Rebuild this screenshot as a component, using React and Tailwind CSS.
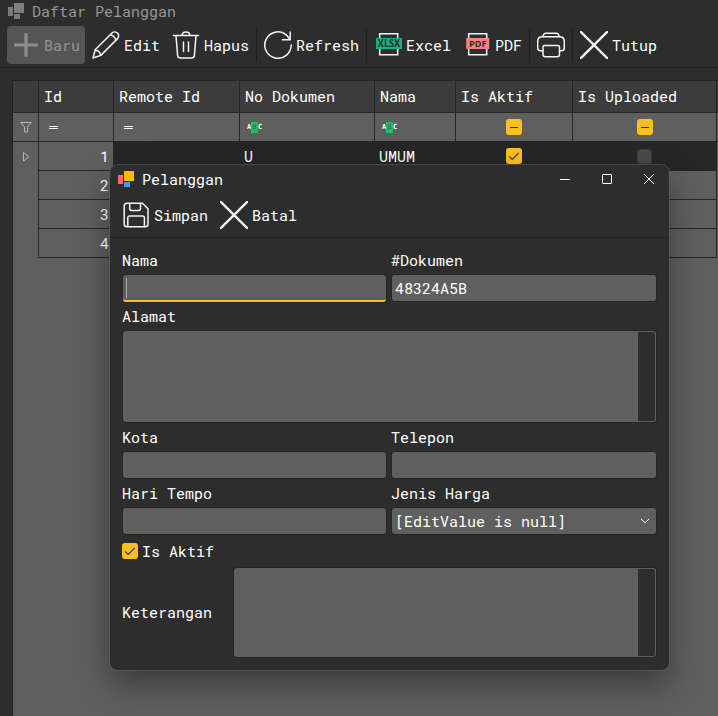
import React, { useState } from 'react'

const columns = [
  { key: "id", title: "Id", filter: "equals", width: "w-[75px]" },
  { key: "remoteId", title: "Remote Id", filter: "equals", width: "w-[126px]" },
  { key: "noDokumen", title: "No Dokumen", filter: "text", width: "w-[135px]" },
  { key: "nama", title: "Nama", filter: "text", width: "w-[81px]" },
  { key: "isAktif", title: "Is Aktif", filter: "check", width: "w-[117px]" },
  { key: "isUploaded", title: "Is Uploaded", filter: "check", width: "w-[144px]" },
];

const rows = [
  { id: 1, noDokumen: "U", nama: "UMUM", isAktif: true, isUploaded: false },
  { id: 2 },
  { id: 3 },
  { id: 4 },
];

const Icon = ({ children, className = "" }) => (
  <svg
    width="28"
    height="28"
    viewBox="0 0 28 28"
    fill="none"
    stroke="#f4f4f4"
    strokeWidth="1.5"
    strokeLinecap="round"
    strokeLinejoin="round"
    className={`shrink-0 ${className}`}
  >
    {children}
  </svg>
);

const PlusIcon = () => (
  <Icon><path d="M14 2.2v23.6M2.2 14h23.6" stroke="#8e8e8e" strokeWidth="3.2" strokeLinecap="butt" /></Icon>
);

const PencilIcon = () => (
  <Icon>
    <path d="M1 27l2.2-8.2L20 2c1.6-1.6 4-1.4 5.5.1s1.6 4 0 5.5L8.8 24.4z" />
    <path d="M18.2 4c2.8.2 5.3 2.7 5.6 5.5M3.4 19.2c2.6.3 4.9 2.5 5.2 5.1" />
  </Icon>
);

const TrashIcon = () => (
  <Icon>
    <path d="M1.5 4.5h25M10.2 4.3c0-4.3 7.6-4.3 7.6 0M4 5l1.6 19.4c.2 1.8 1.2 2.6 2.8 2.6h11.2c1.6 0 2.6-.8 2.8-2.6L24 5M11.5 11v9.5M16.5 11v9.5" />
  </Icon>
);

const RefreshIcon = () => (
  <Icon>
    <path d="M27.2 14A13.2 13.2 0 1 1 22.3 3.8L26 8.5" />
    <path d="M26.2 1v7.7h-7.7" />
  </Icon>
);

const ExcelIcon = () => (
  <Icon>
    <path d="M5.7 7V2.8h18V7M5.7 18v5.7h18V18" strokeLinecap="butt" strokeLinejoin="miter" />
    <rect x="2" y="7" width="26" height="11" fill="#13b183" stroke="none" />
    <text x="15" y="16" textAnchor="middle" textLength="22.5" lengthAdjust="spacingAndGlyphs" fontFamily="Open Sans" fontSize="10" fontWeight="700" fill="#2d2d2d" stroke="none">XLSX</text>
  </Icon>
);

const PdfIcon = () => (
  <Icon>
    <path d="M5.7 7V2.8h18V7M5.7 18v5.7h18V18" strokeLinecap="butt" strokeLinejoin="miter" />
    <rect x="3.2" y="7" width="23" height="11" fill="#f98080" stroke="none" />
    <text x="14.7" y="15.7" textAnchor="middle" textLength="17.5" lengthAdjust="spacingAndGlyphs" fontFamily="Open Sans" fontSize="9" fontWeight="700" fill="#2d2d2d" stroke="none">PDF</text>
  </Icon>
);

const PrinterIcon = () => (
  <Icon>
    <path d="M6 19.8H3.5c-1.8 0-2.8-1-2.8-2.8v-6.500c0-3 1.700-4.700 4.700-4.700h17.200c3 0 4.700 1.700 4.700 4.700V17c0 1.800-1 2.800-2.800 2.800H22.500" />
    <path d="M6 5.500c0-2 1-3.200 3-3.200h10c2 0 3 1.200 3 3.200M7.300 14.500h13.500c1 0 1.700.6 1.700 1.700v7.300c0 1.400-.8 2.200-2.200 2.200H8.200c-1.400 0-2.200-.8-2.200-2.200v-7.300c0-1.100.4-1.700 1.300-1.700z" />
  </Icon>
);

const CloseIcon = () => (
  <Icon><path d="M.8.8l26.400 26.400M27.200.8L.8 27.200" strokeWidth="2.3" /></Icon>
);

const SaveIcon = () => (
  <Icon>
    <path d="M5 2.2h15.500L26 7.700V23c0 1.900-.9 2.800-2.800 2.800H5c-1.900 0-2.800-.9-2.800-2.800V5c0-1.900.9-2.800 2.800-2.800z" />
    <path d="M7.700 2.500v5c0 1.200.6 1.900 1.900 1.900h7c1.300 0 1.900-.7 1.900-1.900v-5M5.800 25.500V16.800c0-1.200.6-1.900 1.900-1.900h12.800c1.300 0 1.900.7 1.900 1.900v8.700" />
  </Icon>
);

const AppLogo = ({ muted }) => (
  <svg width="16" height="16" viewBox="0 0 16 16" shapeRendering="crispEdges" className="shrink-0">
    <rect x="0" y="4" width="5" height="9" fill={muted ? "#7b7b7b" : "#ff6b6b"} />
    <rect x="6" y="0" width="10" height="10" fill={muted ? "#7f7f7f" : "#ffb900"} />
    <rect x="6" y="11" width="6" height="5" fill={muted ? "#7b7b7b" : "#3a9ff2"} />
  </svg>
);

function ToolButton({ icon, label, disabled }) {
  return (
    <button
      className={`flex h-[38px] items-center gap-1 rounded px-[5px] ${
        disabled ? 'bg-[#555555] text-[#969696]' : 'text-white'
      }`}
    >
      {icon}
      {label && <span>{label}</span>}
    </button>
  );
}

const Separator = () => <div className="mt-[2px] h-[34px] w-px bg-[#202020]" />;

function CheckBox({ state }) {
  if (state === "off") {
    return <span className="block h-[15px] w-[15px] rounded-[3px] border border-[#3a3a3a] bg-[#4a4a4a]" />;
  }
  return (
    <svg width="16" height="16" viewBox="0 0 16 16" fill="none" stroke="#2d2d2d" className="shrink-0">
      <rect width="16" height="16" rx="3" fill="#ffc01e" stroke="none" />
      {state === "mixed" ? <path d="M4 8.5h8" /> : <path d="M3 8.3l3.2 3.2 6.6-6.7" strokeWidth="1.1" />}
    </svg>
  );
}

function FilterMark({ type }) {
  if (type === "check") return <CheckBox state="mixed" />;
  if (type === "equals") {
    return (
      <div className="ml-[10px] flex w-[9px] flex-col gap-px">
        <span className="h-px bg-white" />
        <span className="h-px bg-white" />
      </div>
    );
  }
  return (
    <div className="ml-[7px] flex h-[11px] items-center font-['DejaVu_Sans_Mono',monospace] text-[7px] leading-[11px] font-bold">
      <span className="w-[4px]">A</span>
      <span className="h-[11px] w-[7px] bg-[#0ac864] text-center text-[#3f7a58]">B</span>
      <span className="w-[4px]">C</span>
    </div>
  );
}

function Cell({ row, col }) {
  if (col.filter === "check") {
    return row[col.key] === undefined ? null : <CheckBox state={row[col.key] ? "on" : "off"} />;
  }
  return <span className="pb-px">{row[col.key]}</span>;
}

function Grid() {
  return (
    <div className="ml-3 mt-3 flex grow flex-col overflow-hidden border-t border-l border-[#222222] bg-[#5f5f5f]">
      <div className="flex h-8 shrink-0 border-b border-[#262626] bg-[#3c3c3c]">
        <div className="w-[26px] shrink-0 border-r border-[#262626]" />
        {columns.map((col) => (
          <div key={col.key} className={`flex shrink-0 items-center border-r border-[#262626] pb-px pl-[5px] ${col.width}`}>
            {col.title}
          </div>
        ))}
      </div>
      <div className="flex h-[29px] shrink-0 border-b border-[#262626]">
        <div className="flex w-[26px] shrink-0 items-center justify-center border-r border-[#262626]">
          <svg width="12" height="12" viewBox="0 0 12 12" fill="none" stroke="#b5b5b5">
            <path d="M.8 1.5h10.4L7.500 6v5h-3V6z" />
          </svg>
        </div>
        {columns.map((col) => (
          <div
            key={col.key}
            className={`flex shrink-0 items-center border-r border-[#262626] ${
              col.filter === "check" ? 'justify-center' : ''
            } ${col.width}`}
          >
            <FilterMark type={col.filter} />
          </div>
        ))}
      </div>
      {rows.map((row, i) => (
        <div key={row.id} className="flex h-[29px] shrink-0">
          <div className="flex w-[26px] items-center justify-center border-r border-[#262626]">
            {i === 0 && (
              <svg width="8" height="12" viewBox="0 0 8 12" fill="none" stroke="#b5b5b5" className="ml-px">
                <path d="M1.500 1.500v8.600L6.800 5.800z" />
              </svg>
            )}
          </div>
          {columns.map((col) => (
            <div
              key={col.key}
              className={`flex shrink-0 items-center border-r border-b border-[#262626] px-1 text-white ${
                col.key === "id" ? 'justify-end' : col.filter === "check" ? 'justify-center' : ''
              } ${i === 0 && col.key !== "id" ? 'bg-[#262626]' : ''} ${col.width}`}
            >
              <Cell row={row} col={col} />
            </div>
          ))}
        </div>
      ))}
    </div>
  );
}

function Field({ label, children, className = "" }) {
  return (
    <label className={`flex flex-col ${className}`}>
      <span className="-ml-px flex h-7 items-center pb-[2px]">{label}</span>
      {children}
    </label>
  );
}

const inputStyle = "w-full rounded-[3px] bg-[#5f5f5f] px-[3px] outline-none shadow-[0_0_0_1px_#262626]";

// Memo box with the empty scroll bar track on its right side
const Memo = ({ className }) => (
  <div className={`flex rounded-[3px] bg-[#5f5f5f] p-px shadow-[0_0_0_1px_#262626] ${className}`}>
    <textarea className="grow resize-none bg-transparent outline-none" />
    <div className="w-[17px] rounded-r-[2px] bg-[#2d2d2d]" />
  </div>
);

function PelangganDialog() {
  const [nomor, setNomor] = useState("48324A5B");

  return (
    <div className="absolute top-[165px] left-[110px] flex h-[505px] w-[559px] flex-col rounded-lg bg-[#2d2d2d] shadow-[0_0_0_1px_rgba(95,95,95,0.6),0_14px_32px_rgba(0,0,0,0.4)]">
      <div className="flex h-[31px] items-center pb-[3px] pl-2">
        <AppLogo />
        <span className="ml-2 grow">Pelanggan</span>
        <div className="flex items-center gap-[32px] pr-[14px]">
          <svg width="10" height="10" viewBox="0 0 10 10" stroke="white"><path d="M0 5.5h10" /></svg>
          <svg width="10" height="10" viewBox="0 0 10 10" fill="none" stroke="white"><rect x=".5" y=".5" width="9" height="9" rx=".5" /></svg>
          <svg width="11" height="10" viewBox="0 0 11 10" stroke="white"><path d="M0 0l10 10M10 0L0 10" /></svg>
        </div>
      </div>
      <div className="flex h-[42px] gap-[2px] border-b border-[#222222] pl-[7px]">
        <ToolButton icon={<SaveIcon />} label="Simpan" />
        <ToolButton icon={<CloseIcon />} label="Batal" />
      </div>
      <div className="mt-[9px] mr-[13px] ml-[13px] grid grid-cols-[263px_264px] gap-x-[6px] gap-y-[2px]">
        <Field label="Nama">
          <div className={`${inputStyle} -mb-px h-[27px] overflow-hidden border-b-2 border-[#ffc01e]`}>
            <div className="mt-[3px] h-5 w-px bg-[#a8a8a8]" />
          </div>
        </Field>
        <Field label="#Dokumen">
          <input className={`${inputStyle} h-[26px] pb-px`} value={nomor} onChange={(e) => setNomor(e.target.value)} />
        </Field>
        <Field label="Alamat" className="col-span-2">
          <Memo className="h-[91px]" />
        </Field>
        <Field label="Kota"><input className={`${inputStyle} h-[26px]`} /></Field>
        <Field label="Telepon"><input className={`${inputStyle} h-[26px]`} /></Field>
        <Field label="Hari Tempo"><input className={`${inputStyle} h-[26px]`} /></Field>
        <Field label="Jenis Harga">
          <div className={`${inputStyle} flex h-[26px] items-center justify-between pr-[6px]`}>
            <span>[EditValue is null]</span>
            <svg width="10" height="6" viewBox="0 0 10 6" fill="none" stroke="white"><path d="M.8.8L5 4.8 9.200.8" /></svg>
          </div>
        </Field>
      </div>
      <label className="mt-[9px] ml-3 flex h-4 items-center gap-1">
        <CheckBox state="on" />
        <span className="pb-px">Is Aktif</span>
      </label>
      <div className="mt-[9px] mr-[13px] ml-3 flex items-center justify-between">
        <span className="pb-[2px]">Keterangan</span>
        <Memo className="h-[89px] w-[422px]" />
      </div>
    </div>
  );
}

function App() {
  return (
    <div className="relative flex h-[716px] w-[718px] flex-col overflow-hidden bg-[#2d2d2d] font-['Roboto_Mono','DejaVu_Sans_Mono',monospace] text-[15px] leading-5 text-white">
      <div className="flex h-[26px] items-start gap-2 pt-[3px] pl-2 text-[#969696]">
        <AppLogo muted />
        <span className="-mt-[2px]">Daftar Pelanggan</span>
      </div>
      <div className="flex h-[42px] shrink-0 gap-[2px] border-b border-[#222222] pl-[7px]">
        <ToolButton icon={<PlusIcon />} label="Baru" disabled />
        <ToolButton icon={<PencilIcon />} label="Edit" />
        <ToolButton icon={<TrashIcon />} label="Hapus" />
        <Separator />
        <ToolButton icon={<RefreshIcon />} label="Refresh" />
        <Separator />
        <ToolButton icon={<ExcelIcon />} label="Excel" />
        <ToolButton icon={<PdfIcon />} label="PDF" />
        <Separator />
        <ToolButton icon={<PrinterIcon />} />
        <Separator />
        <ToolButton icon={<CloseIcon />} label="Tutup" />
      </div>
      <Grid />
      <PelangganDialog />
    </div>
  );
}

export default App
